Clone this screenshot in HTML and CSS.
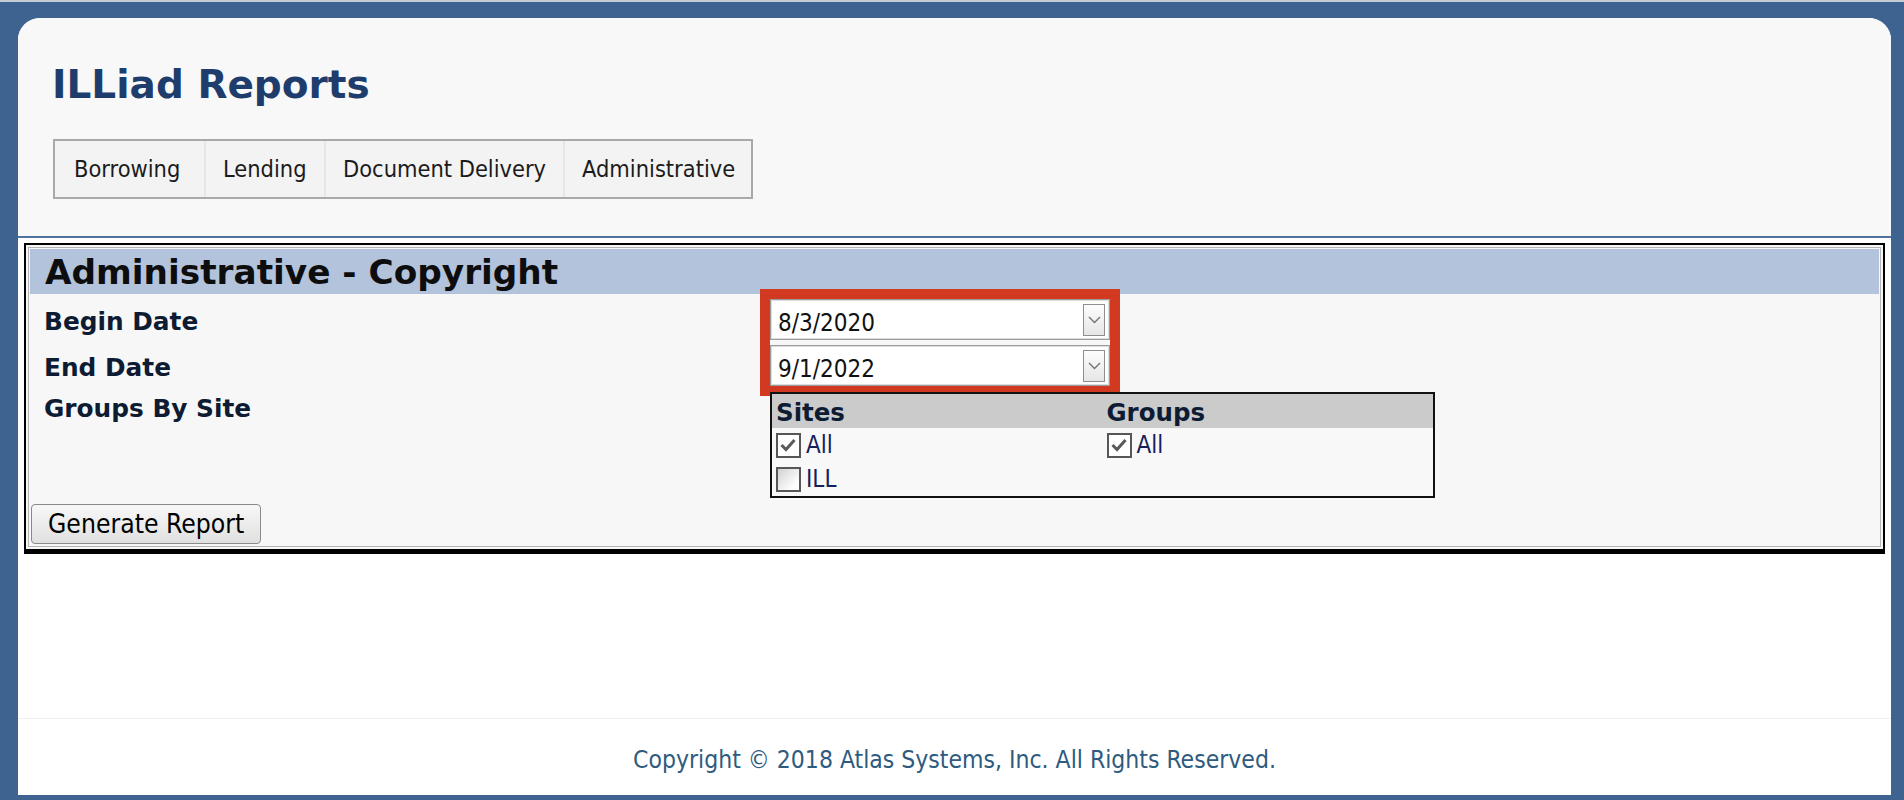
FILE: index.html
```html
<!DOCTYPE html>
<html lang="en">
<head>
<meta charset="utf-8">
<title>ILLiad Reports</title>
<link rel="stylesheet" href="styles.css">
</head>
<body>
<div class="page">
  <header class="top">
    <h1 class="title">ILLiad Reports</h1>
    <nav class="tabs">
      <a class="tab tab-borrowing">Borrowing</a>
      <a class="tab tab-lending">Lending</a>
      <a class="tab tab-delivery">Document Delivery</a>
      <a class="tab tab-admin">Administrative</a>
    </nav>
  </header>
  <main class="content">
    <div class="report-box">
      <div class="report-inner">
        <h2 class="report-title">Administrative - Copyright</h2>
        <div class="form-grid">
          <div class="labels">
            <div class="label">Begin Date</div>
            <div class="label">End Date</div>
          </div>
          <div class="dates">
            <div class="date-field">
              <span class="date-text">8/3/2020</span>
              <span class="drop"><svg width="13" height="8" viewBox="0 0 13 8"><polyline points="1,1 6.5,6.5 12,1" fill="none" stroke="#707070" stroke-width="1.3"/></svg></span>
            </div>
            <div class="date-field">
              <span class="date-text">9/1/2022</span>
              <span class="drop"><svg width="13" height="8" viewBox="0 0 13 8"><polyline points="1,1 6.5,6.5 12,1" fill="none" stroke="#707070" stroke-width="1.3"/></svg></span>
            </div>
          </div>
          <div class="label label-groups">Groups By Site</div>
          <div class="sites-table">
            <div class="th">Sites</div>
            <div class="th">Groups</div>
            <div class="td"><span class="cb"><svg width="21" height="21" viewBox="0 0 21 21"><polyline points="3.5,10 8,14.5 16.5,5" fill="none" stroke="#5a5a5a" stroke-width="3"/></svg></span>All</div>
            <div class="td"><span class="cb"><svg width="21" height="21" viewBox="0 0 21 21"><polyline points="3.5,10 8,14.5 16.5,5" fill="none" stroke="#5a5a5a" stroke-width="3"/></svg></span>All</div>
            <div class="td"><span class="cb cb-empty"></span>ILL</div>
            <div class="td"></div>
          </div>
        </div>
        <button class="generate" type="button">Generate Report</button>
      </div>
    </div>
  </main>
  <footer class="footer">Copyright © 2018 Atlas Systems, Inc. All Rights Reserved.</footer>
</div>
</body>
</html>
```

FILE: styles.css
```css
html, body {
  margin: 0;
}

body {
  box-sizing: border-box;
  height: 800px;
  overflow: hidden;
  background: #3f6391;
  border-top: 2px solid #c5ccd6;
  padding: 16px 13px 5px 18px;
  font-family: "DejaVu Sans Condensed", "Liberation Sans", sans-serif;
}

.page {
  height: 777px;
  background: #ffffff;
  border-radius: 22px 22px 0 0;
  overflow: hidden;
  display: flex;
  flex-direction: column;
}

.top {
  background: #f8f8f8;
  padding: 44px 0 37px 0;
  border-bottom: 2px solid #4f72a0;
}

.title {
  margin: 0;
  padding-left: 34px;
  font-family: "DejaVu Sans", sans-serif;
  font-weight: bold;
  font-size: 39px;
  line-height: 45px;
  color: #1f3d6c;
}

.tabs {
  display: flex;
  width: fit-content;
  height: 60px;
  box-sizing: border-box;
  margin: 32px 0 0 35px;
  border: 2px solid #a9a9a9;
  background: #f3f3f3;
}

.tab {
  display: flex;
  align-items: center;
  box-sizing: border-box;
  padding-left: 17px;
  font-size: 23.4px;
  color: #1b1b1b;
  border-left: 2px solid #e6e6e6;
}

.tab:first-child {
  border-left: none;
  padding-left: 19px;
}

.tab-borrowing { width: 149px; }
.tab-lending { width: 120px; }
.tab-delivery { width: 239px; }
.tab-admin { width: 188px; }

.content {
  flex: 1;
  background: #ffffff;
  padding: 5px 6px 0 6px;
}

.report-box {
  border: 2px solid #000000;
  border-bottom-width: 5px;
  padding: 2px;
  background: #f7f7f7;
}

.report-inner {
  border: 1px solid #b5b5b5;
  padding: 1px;
}

.report-title {
  margin: 0;
  height: 45px;
  background: #b3c3dc;
  padding-left: 15px;
  font-family: "DejaVu Sans", sans-serif;
  font-weight: bold;
  font-size: 34.3px;
  line-height: 46px;
  color: #0d0d0d;
}

.form-grid {
  display: grid;
  grid-template-columns: 740px auto;
  justify-content: start;
  margin-top: 5px;
}

.label {
  padding-left: 14px;
  font-family: "DejaVu Sans", sans-serif;
  font-weight: bold;
  font-size: 24.8px;
  line-height: 46px;
  color: #0d1b33;
}

.label-groups {
  line-height: 34px;
}

.dates {
  width: 340px;
  display: flex;
  flex-direction: column;
  gap: 5px;
  margin-bottom: 6px;
  outline: 10px solid #d13a20;
}

.date-field {
  height: 41px;
  box-sizing: border-box;
  border: 1px solid #9c9c9c;
  box-shadow: inset 0 0 0 1px #dcdcdc;
  background: #ffffff;
  display: flex;
  align-items: center;
  justify-content: space-between;
  padding: 6px 4px 0 7px;
  font-size: 24px;
  color: #111111;
}

.drop {
  align-self: flex-start;
  margin-top: -2px;
  width: 22px;
  height: 32px;
  box-sizing: border-box;
  border: 1px solid #8e8e8e;
  background: linear-gradient(#fdfdfd, #e6e6e6);
  display: flex;
  align-items: center;
  justify-content: center;
}

.sites-table {
  width: 665px;
  box-sizing: border-box;
  border: 2px solid #111111;
  background: #f8f8f8;
  display: grid;
  grid-template-columns: 1fr 1fr;
}

.th {
  height: 34px;
  background: #cbcbcb;
  padding-left: 4px;
  font-family: "DejaVu Sans", sans-serif;
  font-weight: bold;
  font-size: 24.5px;
  line-height: 37px;
  color: #0d1b33;
  overflow: hidden;
}

.td {
  height: 34px;
  display: flex;
  align-items: center;
  gap: 5px;
  padding-left: 4px;
  font-size: 24px;
  color: #14205a;
}

.cb {
  width: 25px;
  height: 25px;
  box-sizing: border-box;
  border: 2px solid #575757;
  background: #ffffff;
  display: flex;
}

.cb-empty {
  background: linear-gradient(135deg, #d2d2d2, #ffffff 80%);
}

.generate {
  display: block;
  height: 40px;
  margin: 6px 0 1px 1px;
  padding: 0 16px;
  border: 1px solid #8a8a8a;
  border-radius: 4px;
  background: linear-gradient(#f8f8f8, #e0e0e0);
  font-family: "DejaVu Sans Condensed", "Liberation Sans", sans-serif;
  font-size: 26.3px;
  color: #000000;
}

.footer {
  height: 77px;
  box-sizing: border-box;
  border-top: 1px solid #f0f0f0;
  padding-top: 26px;
  text-align: center;
  font-size: 24.5px;
  color: #2e5b7e;
  background: #ffffff;
}
```
